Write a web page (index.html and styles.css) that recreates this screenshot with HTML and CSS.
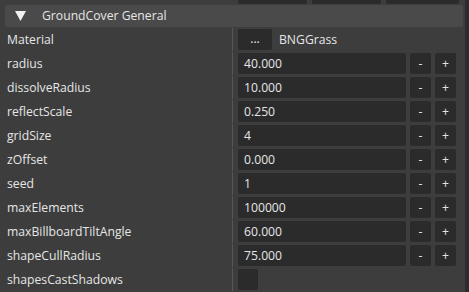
FILE: index.html
```html
<!DOCTYPE html>
<html>
<head>
<meta charset="utf-8">
<link rel="stylesheet" href="styles.css">
</head>
<body>
<div class="frame">
  <div class="panel">
    <div class="topstrip">
      <div class="tbox w69"></div>
      <div class="tbox w69"></div>
      <div class="tbox w73"></div>
    </div>
    <div class="header">
      <svg class="tri" width="11" height="10" viewBox="0 0 11 10"><polygon points="0,0 11,0 5.5,10" fill="#f2f2f2"/></svg>
      <span class="htitle">GroundCover General</span>
    </div>
    <div class="rows">
      <div class="row"><div class="label">Material</div><div class="val"><div class="btn dots">...</div><span class="matname">BNGGrass</span></div></div>
      <div class="row"><div class="label">radius</div><div class="val"><div class="input">40.000</div><div class="btn">-</div><div class="btn">+</div></div></div>
      <div class="row"><div class="label">dissolveRadius</div><div class="val"><div class="input">10.000</div><div class="btn">-</div><div class="btn">+</div></div></div>
      <div class="row"><div class="label">reflectScale</div><div class="val"><div class="input">0.250</div><div class="btn">-</div><div class="btn">+</div></div></div>
      <div class="row"><div class="label">gridSize</div><div class="val"><div class="input">4</div><div class="btn">-</div><div class="btn">+</div></div></div>
      <div class="row"><div class="label">zOffset</div><div class="val"><div class="input">0.000</div><div class="btn">-</div><div class="btn">+</div></div></div>
      <div class="row"><div class="label">seed</div><div class="val"><div class="input">1</div><div class="btn">-</div><div class="btn">+</div></div></div>
      <div class="row"><div class="label">maxElements</div><div class="val"><div class="input">100000</div><div class="btn">-</div><div class="btn">+</div></div></div>
      <div class="row"><div class="label">maxBillboardTiltAngle</div><div class="val"><div class="input">60.000</div><div class="btn">-</div><div class="btn">+</div></div></div>
      <div class="row"><div class="label">shapeCullRadius</div><div class="val"><div class="input">75.000</div><div class="btn">-</div><div class="btn">+</div></div></div>
      <div class="row"><div class="label">shapesCastShadows</div><div class="val"><div class="check"></div></div></div>
    </div>
  </div>
  <div class="scrollbar"></div>
</div>
</body>
</html>
```
FILE: styles.css
```css
html, body {
  margin: 0;
  padding: 0;
  background: #3d3d3d;
  width: 469px;
  height: 292px;
  overflow: hidden;
  font-family: "Open Sans", "Noto Sans", sans-serif;
  color: #e6e6e6;
}
.frame {
  display: flex;
  width: 469px;
  height: 292px;
}
.panel {
  flex: 1;
  display: flex;
  flex-direction: column;
}
.scrollbar {
  width: 4px;
  background: #2c2c2c;
}
.topstrip {
  display: flex;
  height: 4px;
  padding-left: 238px;
  gap: 5px;
  margin-bottom: 1px;
}
.tbox {
  background: #2b2b2b;
  border-radius: 0 0 2px 2px;
}
.w69 { width: 69px; }
.w73 { width: 73px; }
.header {
  margin-left: 5px;
  margin-right: 2px;
  height: 22px;
  background: #4a4a4a;
  border-radius: 2px;
  display: flex;
  align-items: center;
}
.tri {
  margin-left: 10px;
  margin-right: 16px;
}
.htitle {
  font-size: 12.2px;
  line-height: 22px;
}
.rows {
  margin-top: 1px;
  display: flex;
  flex-direction: column;
}
.row {
  display: flex;
  height: 24px;
}
.label {
  width: 225px;
  padding-left: 7px;
  height: 23px;
  border-right: 1px solid #575757;
  font-size: 12.2px;
  line-height: 23px;
  white-space: nowrap;
}
.val {
  display: flex;
  gap: 4px;
  padding-left: 5px;
  padding-top: 1px;
  align-items: flex-start;
}
.input {
  width: 162px;
  height: 21px;
  background: #2b2b2b;
  border-radius: 2px;
  padding-left: 6px;
  font-size: 12.2px;
  line-height: 22px;
}
.btn {
  width: 21px;
  height: 21px;
  background: #2b2b2b;
  border-radius: 2px;
  font-size: 12.2px;
  line-height: 22px;
  text-align: center;
}
.dots {
  width: 34px;
  line-height: 20px;
}
.matname {
  font-size: 12.2px;
  line-height: 22px;
  margin-left: 3px;
}
.check {
  width: 20px;
  height: 21px;
  background: #2b2b2b;
  border-radius: 2px;
}
```
